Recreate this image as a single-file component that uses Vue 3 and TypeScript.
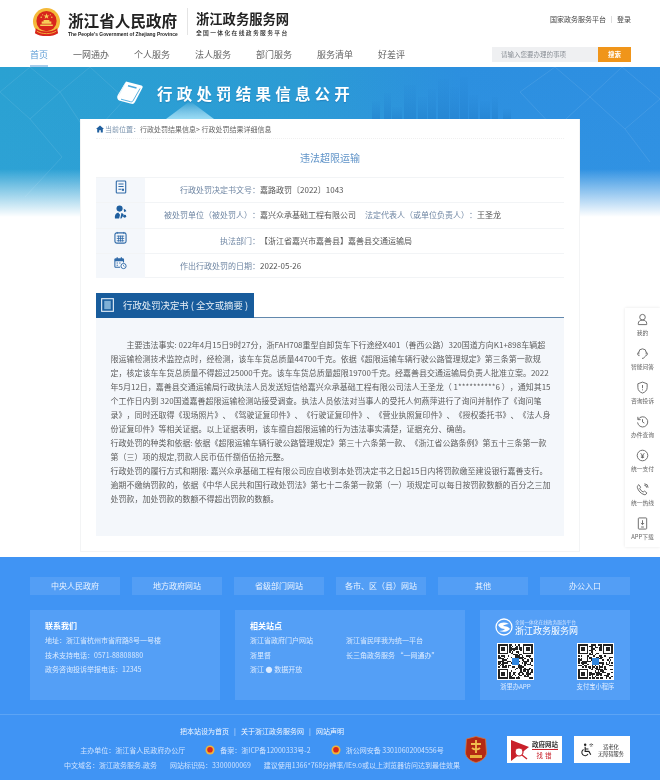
<template>
  <div class="page">
    <header class="header">
      <div class="brand-row">
        <svg class="emblem" viewBox="0 0 30 30">
          <circle cx="15" cy="14" r="14" fill="#f4b93a" />
          <circle cx="15" cy="13.5" r="10.5" fill="#d8261c" />
          <path d="M15 5.5l.8 2.2h2.3l-1.9 1.3.7 2.2-1.9-1.3-1.9 1.3.7-2.2-1.9-1.3h2.3z" fill="#f7cf58" />
          <circle cx="9.5" cy="9.5" r=".8" fill="#f7cf58" />
          <circle cx="20.5" cy="9.5" r=".8" fill="#f7cf58" />
          <circle cx="11" cy="7" r=".6" fill="#f7cf58" />
          <circle cx="19" cy="7" r=".6" fill="#f7cf58" />
          <path d="M8.5 17h13v1.6h-13zM10 14h10v2.4H10zM12 12.4h6V14h-6z" fill="#f7cf58" />
          <path d="M4 21c3 2.5 6 3.2 11 3.2S23 23.500 26 21l1 5c-3 2-7 3-12 3s-9-1-12-3z" fill="#d8261c" />
          <path d="M5 24c3 1.800 6 2.500 10 2.500s7-.7 10-2.500" fill="none" stroke="#f4b93a" stroke-width=".9" />
        </svg>
        <div class="gov-name">
          <div class="gov-cn">浙江省人民政府</div>
          <div class="gov-en">The People's Government of Zhejiang Province</div>
        </div>
        <div class="brand-divider"></div>
        <div class="service-name">
          <div class="service-cn">浙江政务服务网</div>
          <div class="service-sub">全国一体化在线政务服务平台</div>
        </div>
        <div class="top-links">
          <span>国家政务服务平台</span>
          <i></i>
          <span>登录</span>
        </div>
      </div>
      <div class="nav-row">
        <nav class="nav">
          <a v-for="(item, i) in navItems" :key="item" :class="{ active: i === 0 }">{{ item }}</a>
        </nav>
        <div class="search">
          <span class="search-input">请输入您要办理的事项</span>
          <span class="search-btn">搜索</span>
        </div>
      </div>
    </header>

    <main class="main">
      <div class="banner-bg">
        <svg viewBox="0 0 660 150" width="660" height="150">
          <defs>
            <linearGradient id="fade" x1="0" y1="0" x2="0" y2="1">
              <stop offset="0" stop-color="#fff" stop-opacity="0" />
              <stop offset="1" stop-color="#bdf0ff" stop-opacity=".75" />
            </linearGradient>
            <linearGradient id="tower" x1="0" y1="0" x2="0" y2="1">
              <stop offset="0" stop-color="#2483d2" stop-opacity=".08" />
              <stop offset="1" stop-color="#1f7cc9" stop-opacity=".5" />
            </linearGradient>
          </defs>
          <path
            d="M0 25 L30 0 L60 25 L30 52 Z M60 25 L90 0 L125 32 L90 70 Z M520 25 L555 0 L590 30 L555 62 Z M590 30 L622 0 L660 32 L625 62 Z M30 52 L62 90 L25 130 M625 62 L650 95"
            fill="none"
            stroke="#fff"
            stroke-opacity=".13"
            stroke-width=".7"
          />
          <g fill="url(#tower)">
            <rect v-for="b in skyline" :key="b[0]" :x="b[0]" :y="b[1]" :width="b[2]" :height="52 - b[1]" />
          </g>
          <path d="M166 52 L190 34 L214 52 Z" fill="url(#fade)" />
        </svg>
      </div>

      <div class="banner-head">
        <svg class="book-icon" viewBox="0 0 28 26">
          <path d="M10 1.500 25.500 5.500c1.200.4 1.500 1.300 1 2.300L19 22c-.8 1.500-2 2.300-3.800 1.800L4 20.800C1.500 20 .5 17.500 1.800 15z" fill="#fff" />
          <path d="M12 5.800l8.500 2.200" stroke="#4aa8dc" stroke-width="1.400" />
          <path d="M24 8.500 17 20.800c-.6 1-1.400 1.200-2.500.9L5 19.200" stroke="#4aa8dc" stroke-width=".9" fill="none" />
          <path d="M9 3.500 2.800 15.500" stroke="#d8eef8" stroke-width=".8" />
        </svg>
        <div class="banner-title">行政处罚结果信息公开</div>
      </div>

      <section class="card">
        <div class="crumb">
          <svg class="home-icon" viewBox="0 0 10 10">
            <path d="M5 .5 10 5H8.500v4.500H6V6.500H4v3H1.500V5H0z" fill="#1f5f9f" />
          </svg>
          <span class="crumb-first">当前位置：</span>
          <span>行政处罚结果信息&gt; 行政处罚结果详细信息</span>
        </div>
        <h1 class="doc-title">违法超限运输</h1>

        <div class="info">
          <div class="info-row">
            <div class="info-icon">
              <svg viewBox="0 0 14 16" width="12" height="14">
                <rect x="1.500" y="1" width="11" height="14" rx="1" fill="none" stroke="#2f6aa8" stroke-width="1.300" />
                <path d="M4 4.500h6M4 7.500h6M4 10.500h3.500" stroke="#2f6aa8" stroke-width="1.200" />
                <rect x="8" y="10" width="2.500" height="2.500" fill="#2f6aa8" />
              </svg>
            </div>
            <div class="info-label">行政处罚决定书文号：</div>
            <div class="info-value">嘉路政罚〔2022〕1043</div>
          </div>
          <div class="info-row">
            <div class="info-icon">
              <svg viewBox="0 0 14 15" width="13" height="14">
                <circle cx="6" cy="3.800" r="3.300" fill="#1f5f9f" />
                <path d="M1 14.500c-.5-3.500.8-6 3.500-6.500l2 2.500-1 4zM8 8.500c1.500.5 2.200 1 2.500 2L8 14.500H6.800z" fill="#1f5f9f" />
                <path d="M10.500 4c1.500.8 2.500 1.500 2.800 2.800l-2.500.7z" fill="#1f5f9f" />
                <circle cx="11.500" cy="12" r="1.600" fill="#1f5f9f" />
              </svg>
            </div>
            <div class="info-label">被处罚单位（被处罚人）：</div>
            <div class="info-value">
              嘉兴众承基础工程有限公司<span class="inline-label">法定代表人（或单位负责人）：</span>王圣龙
            </div>
          </div>
          <div class="info-row">
            <div class="info-icon">
              <svg viewBox="0 0 14 14" width="13" height="13">
                <rect x="1" y="2" width="12" height="11" rx="2" fill="none" stroke="#2f6aa8" stroke-width="1.200" />
                <path d="M3.500 1v2M10.500 1v2M3 5.500h8M3 8h8M3 10.500h8M5 5v6.500M7 5v6.500M9 5v6.500" stroke="#2f6aa8" stroke-width=".9" />
              </svg>
            </div>
            <div class="info-label">执法部门：</div>
            <div class="info-value">【浙江省嘉兴市嘉善县】嘉善县交通运输局</div>
          </div>
          <div class="info-row">
            <div class="info-icon">
              <svg viewBox="0 0 15 15" width="13" height="14">
                <path d="M7 12.500H2a1 1 0 0 1-1-1V3.500a1 1 0 0 1 1-1h8a1 1 0 0 1 1 1V7" fill="none" stroke="#2f6aa8" stroke-width="1.200" />
                <path d="M1 3h10v2.500H1zM3 .8h1.400v2.500H3zM7.800.8h1.400v2.500H7.800z" fill="#2f6aa8" />
                <path d="M3 7.500h1.500M6 7.500h1.500M3 10h1.500" stroke="#2f6aa8" stroke-width="1.200" />
                <circle cx="11" cy="11" r="3" fill="#fff" stroke="#2f6aa8" stroke-width="1.100" />
                <path d="M11 9.500V11l1.200.7" fill="none" stroke="#2f6aa8" stroke-width=".8" />
              </svg>
            </div>
            <div class="info-label">作出行政处罚的日期：</div>
            <div class="info-value">2022-05-26</div>
          </div>
        </div>

        <div class="section-head">
          <div class="section-tab">
            <svg class="section-icon" viewBox="0 0 14 15">
              <rect x=".7" y=".7" width="12.600" height="13.600" fill="none" stroke="#e6f0f8" stroke-width="1.200" />
              <rect x="3.500" y="3" width="7" height="9" fill="#7fb0d6" />
            </svg>
            <span>行政处罚决定书 ( 全文或摘要 )</span>
          </div>
        </div>
        <div class="section-body">
          <p v-for="(line, i) in bodyLines" :key="i" :class="{ indent: i === 0 }">{{ line }}</p>
        </div>
      </section>

      <aside class="side-bar">
        <div class="side-item">
          <svg viewBox="0 0 14 14"><circle cx="7" cy="4.500" r="3" /><path d="M2.500 12.500v-1.500c0-2 1.800-3.300 4.500-3.300s4.500 1.300 4.500 3.300v1.500z" /></svg>
          <span>我的</span>
        </div>
        <div class="side-item">
          <svg viewBox="0 0 14 14"><path d="M3 8V6a4 4 0 0 1 8 0v2" /><path d="M3 5.500C1.800 6 1.500 7 1.800 8s1 1.500 2 1.300M11 5.500c1.200.5 1.500 1.500 1.200 2.500s-1 1.500-2 1.300" /><path d="M10 10c-.8 1.500-2 2.300-3.500 2.300" /></svg>
          <span>智能问答</span>
        </div>
        <div class="side-item">
          <svg viewBox="0 0 14 14"><path d="M7 1.200 12 3v4c0 3-2 5-5 6-3-1-5-3-5-6V3z" /><path d="M7 4.300v3.400M7 9v1" /></svg>
          <span>咨询投诉</span>
        </div>
        <div class="side-item">
          <svg viewBox="0 0 14 14"><path d="M2.500 4.500a5.500 5.500 0 1 1-.8 3.500" /><path d="M2 2v3h3" /><path d="M7 4.500V7.500l2 1.200" /></svg>
          <span>办件查询</span>
        </div>
        <div class="side-item">
          <svg viewBox="0 0 14 14"><circle cx="7" cy="7" r="5.700" /><path d="M5 4.500 7 7l2-2.500M7 7v3M5.300 7.500h3.400M5.300 9h3.400" /></svg>
          <span>统一支付</span>
        </div>
        <div class="side-item">
          <svg viewBox="0 0 14 14"><path d="M3 1.800 5 4.500 4 6c.8 1.700 2 2.900 3.700 3.700l1.500-1 2.500 2-1 1.500c-.5.500-1.200.6-2 .3C5 11.300 2.500 8.500 1.500 5c-.2-.9 0-1.700.5-2.300z" /><path d="M9 2.500a2.500 2.500 0 0 1 2.500 2.500M9 .9A4 4 0 0 1 13 5" /></svg>
          <span>统一热线</span>
        </div>
        <div class="side-item">
          <svg viewBox="0 0 14 14"><rect x="2.500" y="1" width="9" height="12" rx=".8" /><path d="M7 3.500v4.500M5.300 6.500 7 8.200l1.700-1.700M5.500 10.800h3" /></svg>
          <span>APP下载</span>
        </div>
      </aside>
    </main>

    <footer class="footer">
      <div class="site-tabs">
        <div v-for="tab in siteTabs" :key="tab" class="site-tab">{{ tab }}</div>
      </div>
      <div class="panels">
        <div class="panel contact">
          <h3>联系我们</h3>
          <p>地址：浙江省杭州市省府路8号一号楼</p>
          <p>技术支持电话：0571-88808880</p>
          <p>政务咨询投诉举报电话：12345</p>
        </div>
        <div class="panel related">
          <div class="related-col">
            <h3>相关站点</h3>
            <p>浙江省政府门户网站</p>
            <p>浙里督</p>
            <p>浙江 ● 数据开放</p>
          </div>
          <div class="related-col second">
            <p>浙江省民呼我为统一平台</p>
            <p>长三角政务服务 “一网通办”</p>
          </div>
        </div>
        <div class="panel apps">
          <div class="apps-logo">
            <svg viewBox="0 0 18 18" width="18" height="18">
              <circle cx="9" cy="9" r="8" fill="none" stroke="#fff" stroke-width="1.300" />
              <path d="M3 7c3-3 7-3 11-1-3 0-5 1-6 2 3 0 6 1 7 3-3 3-7 3.500-11 2 3 0 5-1 6-2-3 0-5-1-7-4z" fill="#fff" />
            </svg>
            <div>
              <div class="apps-sub">全国一体化在线政务服务平台</div>
              <div class="apps-name">浙江政务服务网</div>
            </div>
          </div>
          <div class="qr-row">
            <div v-for="qr in qrCodes" :key="qr.label" class="qr-item">
              <svg class="qr" viewBox="-1 -1 27 27" shape-rendering="crispEdges">
                <rect x="-1" y="-1" width="27" height="27" fill="#fff" />
                <path :d="qr.path" fill="#222" />
                <rect x="10" y="10" width="5" height="5" fill="#2f86e0" />
              </svg>
              <span>{{ qr.label }}</span>
            </div>
          </div>
        </div>
      </div>

      <div class="footer-bottom">
        <div class="legal">
          <div class="legal-links">
            <span>把本站设为首页</span><i>|</i><span>关于浙江政务服务网</span><i>|</i><span>网站声明</span>
          </div>
          <div class="legal-line second">
            <span>主办单位：浙江省人民政府办公厅</span>
            <span class="with-badge">
              <svg viewBox="0 0 10 10" width="10" height="10">
                <circle cx="5" cy="5" r="4.500" fill="#f0b53a" /><circle cx="5" cy="4.700" r="2.800" fill="#d8261c" />
              </svg>
              备案：浙ICP备12000333号-2
            </span>
            <span class="with-badge">
              <svg viewBox="0 0 10 10" width="10" height="10">
                <circle cx="5" cy="5" r="4.500" fill="#f0b53a" /><circle cx="5" cy="4.700" r="2.800" fill="#d8261c" />
              </svg>
              浙公网安备 33010602004556号
            </span>
          </div>
          <div class="legal-line third">
            <span>中文域名：浙江政务服务.政务</span>
            <span>网站标识码：3300000069</span>
            <span>建议使用1366*768分辨率/IE9.0或以上浏览器访问达到最佳效果</span>
          </div>
        </div>
        <div class="badges">
          <svg class="shield" viewBox="0 0 22 27">
            <path d="M11 .5 20.500 3 21.500 17C21 22 16 25.500 11 26.500 6 25.500 1 22 .5 17L1.500 3z" fill="#b32a14" stroke="#d9763f" stroke-width=".8" />
            <path d="M11 4v13M6 8h10M7 12c2 2 6 2 8 0" fill="none" stroke="#f2c14e" stroke-width="1.800" />
            <rect x="5" y="19" width="12" height="3" fill="#e8b23c" />
          </svg>
          <div class="badge-box gov-badge">
            <svg viewBox="0 0 20 24" width="20" height="24">
              <path d="M1 2 19 9 1 23z" fill="#c9202a" />
              <circle cx="9" cy="14" r="4" fill="#fff" stroke="#c9202a" stroke-width="1.200" />
              <path d="M12 17l5 4" stroke="#c9202a" stroke-width="1.500" />
            </svg>
            <div class="gov-badge-text">
              <div class="gov-badge-top">政府网站</div>
              <div class="gov-badge-bottom">找错</div>
            </div>
          </div>
          <div class="badge-box elder-badge">
            <svg viewBox="0 0 16 16" width="15" height="15">
              <circle cx="5.500" cy="3" r="1.300" fill="#222" />
              <path d="M5.500 5v5h4l2 3.500M5.500 7.500h3.500" fill="none" stroke="#222" stroke-width="1.200" />
              <path d="M3.800 8A3.500 3.500 0 1 0 8.500 12.800" fill="none" stroke="#222" stroke-width="1.100" />
              <path d="M10 3a3 3 0 0 1 4 0M11 4.500a1.500 1.500 0 0 1 2 0" fill="none" stroke="#222" stroke-width=".8" />
            </svg>
            <div class="elder-text">
              <div>适老化</div>
              <div>无障碍服务</div>
            </div>
          </div>
        </div>
      </div>
    </footer>
  </div>
</template>

<script setup lang="ts">
const navItems = ['首页', '一网通办', '个人服务', '法人服务', '部门服务', '服务清单', '好差评']
const siteTabs = ['中央人民政府', '地方政府网站', '省级部门网站', '各市、区（县）网站', '其他', '办公入口']

const bodyLines = [
  '主要违法事实: 022年4月15日9时27分，浙FAH708重型自卸货车下行途经X401（善西公路）320国道方向K1+898车辆超',
  '限运输检测技术监控点时，经检测，该车车货总质量44700千克。依据《超限运输车辆行驶公路管理规定》第三条第一款规',
  '定，核定该车车货总质量不得超过25000千克。该车车货总质量超限19700千克。经嘉善县交通运输局负责人批准立案。2022',
  '年5月12日，嘉善县交通运输局行政执法人员发送短信给嘉兴众承基础工程有限公司法人王圣龙（ 1**********6 ），通知其15',
  '个工作日内到 320国道嘉善超限运输检测站接受调查。执法人员依法对当事人的受托人何燕萍进行了询问并制作了《询问笔',
  '录》，同时还取得《现场照片》、《驾驶证复印件》、《行驶证复印件》、《营业执照复印件》、《授权委托书》、《法人身',
  '份证复印件》等相关证据。以上证据表明，该车擅自超限运输的行为违法事实清楚，证据充分、确凿。',
  '行政处罚的种类和依据: 依据《超限运输车辆行驶公路管理规定》第三十六条第一款、《浙江省公路条例》第五十三条第一款',
  '第（三）项的规定,罚款人民币伍仟捌佰伍拾元整。',
  '行政处罚的履行方式和期限: 嘉兴众承基础工程有限公司应自收到本处罚决定书之日起15日内将罚款缴至建设银行嘉善支行。',
  '逾期不缴纳罚款的，依据《中华人民共和国行政处罚法》第七十二条第一款第（一）项规定可以每日按罚款数额的百分之三加',
  '处罚款，加处罚款的数额不得超出罚款的数额。',
]

// x, top, width of each tower behind the banner title
const skyline: number[][] = [
  [372, 34, 8], [384, 26, 7], [392, 40, 10], [404, 18, 12], [418, 30, 9], [428, 22, 8], [438, 12, 11],
  [450, 20, 9], [460, 10, 8], [469, 28, 9], [480, 34, 10], [492, 30, 6], [503, 42, 8],
]

const makeQr = (seed: number) => {
  let s = seed
  const next = () => {
    s = (s * 1103515245 + 12345) & 0x7fffffff
    return s / 0x7fffffff
  }
  let d = ''
  const inFinder = (x: number, y: number) =>
    (x < 8 && y < 8) || (x > 16 && y < 8) || (x < 8 && y > 16)
  for (let y = 0; y < 25; y++) {
    for (let x = 0; x < 25; x++) {
      if (!inFinder(x, y) && next() > 0.5) d += `M${x} ${y}h1v1h-1z`
    }
  }
  const finder = (x: number, y: number) =>
    `M${x} ${y}h7v1h-7zM${x} ${y + 6}h7v1h-7zM${x} ${y + 1}h1v5h-1zM${x + 6} ${y + 1}h1v5h-1zM${x + 2} ${y + 2}h3v3h-3z`
  return d + finder(0, 0) + finder(18, 0) + finder(0, 18)
}

const qrCodes = [
  { label: '浙里办APP', path: makeQr(17) },
  { label: '支付宝小程序', path: makeQr(911) },
]
</script>

<style scoped>
.page {
  position: relative;
  width: 660px;
  height: 780px;
  overflow: hidden;
  background: #fff;
  color: #555;
  font-family: "Noto Sans CJK SC", "Noto Sans", sans-serif;
  text-spacing-trim: space-all;
  filter: blur(0.3px);
}

/* header */
.header {
  height: 67px;
  box-sizing: border-box;
  position: relative;
  z-index: 2;
  background: #fff;
}

.brand-row {
  display: flex;
  align-items: flex-start;
  height: 44px;
  padding: 8px 29px 0 32px;
  box-sizing: border-box;
}

.emblem {
  width: 29px;
  height: 29px;
  flex: none;
}

.gov-name {
  margin-left: 7px;
  width: 112px;
  color: #222;
}

.gov-cn {
  font-size: 15.6px;
  line-height: 20px;
  margin-top: 2px;
  font-weight: 700;
  white-space: nowrap;
}

.gov-en {
  font-family: "Liberation Sans", sans-serif;
  font-size: 4.9px;
  font-weight: 700;
  line-height: 7px;
  margin-top: 1px;
  white-space: nowrap;
}

.brand-divider {
  width: 1px;
  height: 27px;
  margin: 0 8px 0 7px;
  background: #e4e4e4;
}

.service-name {
  color: #222;
}

.service-cn {
  font-size: 13.3px;
  font-weight: 700;
  line-height: 17px;
  margin-top: 2px;
  white-space: nowrap;
}

.service-sub {
  font-size: 5.8px;
  font-weight: 500;
  letter-spacing: 1.32px;
  line-height: 9px;
  margin-top: 1px;
  white-space: nowrap;
}

.top-links {
  margin-left: auto;
  margin-top: 6px;
  display: flex;
  align-items: center;
  font-size: 7px;
  color: #444;
  line-height: 10px;
}

.top-links i {
  width: 1px;
  height: 7px;
  margin: 0 5px;
  background: #ddd;
}

.nav-row {
  display: flex;
  justify-content: space-between;
  padding: 0 29px 0 30px;
  height: 23px;
}

.nav {
  display: flex;
  gap: 25px;
  font-size: 9px;
  line-height: 21px;
  color: #666;
}

.nav a {
  height: 23px;
  box-sizing: border-box;
  white-space: nowrap;
}

.nav a.active {
  color: #5b9bd5;
  border-bottom: 2px solid #a9cdea;
}

.search {
  display: flex;
  height: 15px;
  margin-top: 3px;
  font-size: 6.500px;
  line-height: 15px;
}

.search-input {
  width: 106px;
  padding-left: 9px;
  box-sizing: border-box;
  background: #eff0f2;
  color: #8a8f96;
}

.search-btn {
  width: 33px;
  text-align: center;
  background: #f0951a;
  color: #fff;
  font-weight: 700;
}

/* banner + card */
.main {
  position: relative;
  padding-bottom: 5px;
  background: #fff;
}

.banner-bg {
  position: absolute;
  left: 0;
  top: 0;
  width: 660px;
  height: 150px;
  background:
    linear-gradient(180deg, rgba(255, 255, 255, 0) 0, rgba(255, 255, 255, 0) 68%, #fff 100%),
    linear-gradient(180deg, rgba(255, 255, 255, 0) 0, rgba(70, 170, 235, 0.15) 100%),
    linear-gradient(90deg, #2aa1d2 0, #2b9bd4 45%, #2c8fdf 70%, #2e8fe2 100%);
}

.banner-bg svg {
  display: block;
}

.banner-head {
  position: relative;
  height: 52px;
  box-sizing: border-box;
  padding-left: 116px;
  display: flex;
  align-items: center;
}

.book-icon {
  width: 28px;
  height: 26px;
  flex: none;
}

.banner-title {
  margin-left: 13px;
  font-size: 15.500px;
  font-weight: 700;
  letter-spacing: 4.200px;
  color: #fff;
  white-space: nowrap;
  text-shadow: 0 1px 1px rgba(0, 60, 120, 0.25);
}

.card {
  position: relative;
  width: 500px;
  height: 433px;
  margin: 0 auto;
  padding: 0 15px;
  box-sizing: border-box;
  background: #fff;
  border: 1px solid #f3f4f5;
  border-top: 0;
}

.crumb {
  height: 20px;
  display: flex;
  align-items: center;
  font-size: 7px;
  color: #666;
  border-bottom: 1px dotted #f0f0f0;
  box-sizing: border-box;
  white-space: nowrap;
}

.home-icon {
  width: 8px;
  height: 8px;
  margin-right: 1px;
  flex: none;
}

.crumb-first {
  color: #7a93ad;
}

.doc-title {
  margin: 0;
  height: 38px;
  line-height: 38px;
  text-align: center;
  font-size: 10px;
  font-weight: 400;
  color: #5f93c8;
}

.info-row {
  display: grid;
  grid-template-columns: 49px 115px 1fr;
  height: 25.250px;
  box-sizing: border-box;
  border-top: 1px solid #f2f4f6;
  font-size: 8px;
  line-height: 24px;
  white-space: nowrap;
}

.info-row:last-child {
  border-bottom: 1px solid #f2f4f6;
}

.info-icon {
  background: #f4f7fb;
  display: flex;
  justify-content: center;
  padding-top: 2px;
  box-sizing: border-box;
}

.info-icon svg {
  display: block;
}

.info-label {
  text-align: right;
  color: #6f86a3;
}

.info-value {
  color: #555;
}

.inline-label {
  margin-left: 9px;
  color: #6f86a3;
}

.section-head {
  margin-top: 14.500px;
  height: 25px;
  box-sizing: border-box;
  border-bottom: 1.500px solid #6288ad;
}

.section-tab {
  width: 158px;
  height: 25px;
  display: flex;
  align-items: center;
  padding-left: 5px;
  box-sizing: border-box;
  background: #185c9c;
  color: #e8f0f7;
  font-size: 9.400px;
  white-space: nowrap;
}

.section-icon {
  width: 13px;
  height: 14px;
  margin-right: 9px;
  flex: none;
}

.section-body {
  height: 218px;
  box-sizing: border-box;
  padding: 20px 0 0 14.500px;
  background: #f4f7fb;
}

.section-body p {
  margin: 0;
  font-size: 8px;
  line-height: 14px;
  color: #5c5c5c;
  white-space: nowrap;
}

.section-body p.indent {
  padding-left: 16px;
}

/* side tools */
.side-bar {
  position: absolute;
  right: 0;
  top: 241px;
  width: 35px;
  height: 239px;
  padding-top: 5px;
  box-sizing: border-box;
  background: #fff;
  box-shadow: 0 0 3px rgba(0, 0, 0, 0.1);
}

.side-item {
  height: 34px;
  display: flex;
  flex-direction: column;
  align-items: center;
  font-size: 5.800px;
  line-height: 8px;
  color: #666;
  white-space: nowrap;
}

.side-item svg {
  width: 13px;
  height: 13px;
  margin-bottom: 3px;
  fill: none;
  stroke: #666;
  stroke-width: 1;
}

/* footer */
.footer {
  height: 223px;
  box-sizing: border-box;
  padding-top: 20px;
  background: #4094f4;
  color: #fff;
}

.site-tabs {
  display: grid;
  grid-template-columns: repeat(6, 90px);
  gap: 12px;
  padding-left: 30px;
}

.site-tab {
  height: 18px;
  line-height: 18px;
  text-align: center;
  font-size: 8px;
  background: rgba(255, 255, 255, 0.1);
  color: #eaf3ff;
  white-space: nowrap;
}

.panels {
  display: grid;
  grid-template-columns: 190px 230px 150px;
  gap: 15px;
  padding: 15px 0 14px 30px;
  border-bottom: 1px solid rgba(255, 255, 255, 0.15);
}

.panel {
  height: 90px;
  box-sizing: border-box;
  background: #549ff6;
}

.panel h3 {
  margin: 0;
  font-size: 8px;
  font-weight: 700;
  line-height: 14px;
  color: #fff;
}

.panel p {
  margin: 0;
  font-size: 7px;
  line-height: 14.500px;
  color: #dcebff;
  white-space: nowrap;
}

.contact {
  padding: 9px 0 0 15px;
}

.related {
  display: flex;
  padding: 9px 0 0 15px;
}

.related-col {
  width: 96px;
}

.related-col.second {
  padding-top: 14px;
}

.apps {
  padding: 8px 0 0 15px;
}

.apps-logo {
  display: flex;
  align-items: center;
  gap: 2px;
  height: 18px;
}

.apps-sub {
  font-size: 4.700px;
  line-height: 6px;
  color: #cfe3ff;
  white-space: nowrap;
}

.apps-name {
  font-size: 9px;
  line-height: 11px;
  color: #fff;
  white-space: nowrap;
}

.qr-row {
  display: flex;
  gap: 43px;
  margin-top: 7px;
  padding-left: 2px;
}

.qr-item {
  width: 37px;
  display: flex;
  flex-direction: column;
  align-items: center;
  font-size: 6.300px;
  line-height: 8px;
  color: #dcebff;
  white-space: nowrap;
}

.qr {
  display: block;
  width: 37px;
  height: 37px;
  margin-bottom: 3px;
}

.footer-bottom {
  display: flex;
  padding: 10px 30px 0 62px;
}

.legal {
  width: 401px;
  font-size: 7px;
  line-height: 12px;
  color: #cfe3ff;
  white-space: nowrap;
}

.legal-links {
  display: flex;
  justify-content: center;
  color: #f2f7ff;
}

.legal-links i {
  font-style: normal;
  margin: 0 5px;
  color: #cfe3ff;
}

.legal-line {
  display: flex;
  justify-content: center;
}

.legal-line.second {
  margin-top: 7px;
  gap: 20px;
}

.legal-line.third {
  margin-top: 3px;
  gap: 13px;
}

.with-badge {
  display: inline-flex;
  align-items: center;
  gap: 5px;
}

.badges {
  display: flex;
  align-items: flex-start;
  margin: 11px 0 0 3px;
}

.shield {
  width: 22px;
  height: 27px;
  margin-right: 20px;
  flex: none;
}

.badge-box {
  height: 27px;
  background: #fff;
  box-sizing: border-box;
  display: flex;
  align-items: center;
  flex: none;
}

.gov-badge {
  width: 55px;
  margin-right: 12px;
  padding-left: 3px;
  gap: 2px;
}

.gov-badge-text {
  text-align: center;
  white-space: nowrap;
}

.gov-badge-top {
  font-size: 6.500px;
  line-height: 9px;
  font-weight: 700;
  color: #333;
  border-bottom: 1px solid #c9202a;
}

.gov-badge-bottom {
  font-size: 6.500px;
  line-height: 10px;
  letter-spacing: 2px;
  color: #c9202a;
}

.elder-badge {
  width: 56px;
  padding-left: 6px;
  gap: 3px;
}

.elder-text {
  font-size: 5.200px;
  line-height: 7px;
  color: #333;
  text-align: center;
  white-space: nowrap;
}
</style>

<style>
html,
body {
  margin: 0;
  background: #fff;
}
</style>
